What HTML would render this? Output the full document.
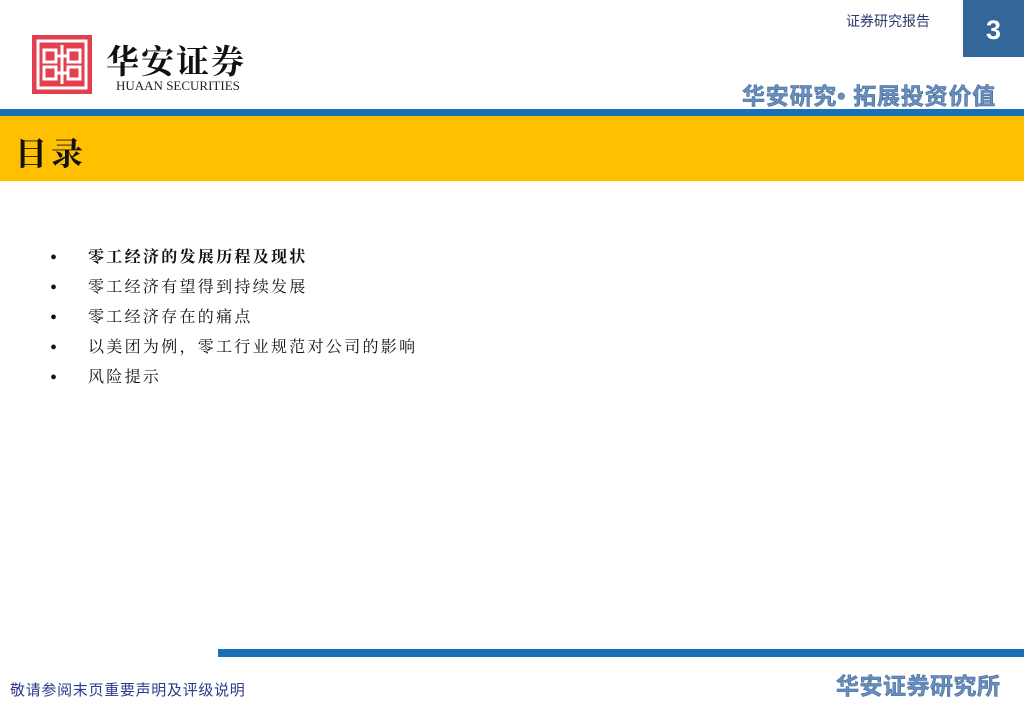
<!DOCTYPE html>
<html><head><meta charset="utf-8"><style>
body{margin:0;width:1024px;height:709px;position:relative;background:#fff;overflow:hidden;font-family:"Liberation Sans","Noto Sans CJK SC",sans-serif}
.a{position:absolute}
.li{position:absolute;left:50px;font-family:"Liberation Serif","Noto Serif CJK SC",serif;font-size:16px;letter-spacing:2.3px;color:#111;line-height:20px}
.li b.d{position:absolute;left:0;top:0;font-size:20px;font-weight:normal}
.li span{position:absolute;left:38px;white-space:nowrap}
</style></head><body>
<div class="a" style="left:963px;top:0;width:61px;height:57px;background:#336699;color:#fff;font-weight:bold;font-size:27px;text-align:center;line-height:60px">3</div>
<div class="a" style="left:846px;top:11px;font-size:14px;color:#2a3b6b">证券研究报告</div>
<div class="a" style="left:32px;top:35px;width:60px;height:59px;background:#e3404f">
<svg width="60" height="59" viewBox="0 0 60 59"><g fill="none" stroke="#fff" stroke-width="3"><rect x="6" y="6" width="48" height="47"/><rect x="12" y="15" width="12" height="12"/><rect x="36" y="15" width="12" height="12"/><rect x="12" y="32" width="12" height="12"/><rect x="36" y="32" width="12" height="12"/><path d="M24 21H36M24 38H36M30 10V49"/></g></svg></div>
<div class="a" style="left:106px;top:36px;font-family:'Noto Serif CJK SC',serif;font-size:33px;letter-spacing:2px;color:#111;font-weight:bold">华安证券</div>
<div class="a" style="left:116px;top:78px;font-family:'Liberation Serif',serif;font-size:13px;color:#222">HUAAN SECURITIES</div>
<div class="a" style="left:0;top:109px;width:1024px;height:7px;background:#1a6fb5"></div>
<div class="a" style="left:742px;top:84px;line-height:24px;font-size:23px;letter-spacing:0.8px;font-weight:bold;color:#6a8fbf;-webkit-text-stroke:0.5px #35628f;white-space:nowrap">华安研究• 拓展投资价值</div>
<div class="a" style="left:0;top:116px;width:1024px;height:65px;background:#fec000"></div>
<div class="a" style="left:15px;top:129px;font-family:'Noto Serif CJK SC',serif;font-size:32px;font-weight:bold;letter-spacing:4px;color:#111">目录</div>
<div class="li" style="top:248px"><b class="d">•</b><span style="font-weight:bold">零工经济的发展历程及现状</span></div>
<div class="li" style="top:278px"><b class="d">•</b><span>零工经济有望得到持续发展</span></div>
<div class="li" style="top:308px"><b class="d">•</b><span>零工经济存在的痛点</span></div>
<div class="li" style="top:338px"><b class="d">•</b><span>以美团为例，零工行业规范对公司的影响</span></div>
<div class="li" style="top:368px"><b class="d">•</b><span>风险提示</span></div>
<div class="a" style="left:218px;top:649px;width:806px;height:8px;background:#1a6fb5"></div>
<div class="a" style="left:10px;top:679px;font-size:15px;letter-spacing:0.7px;color:#2a3b8b;white-space:nowrap">敬请参阅末页重要声明及评级说明</div>
<div class="a" style="left:836px;top:667px;font-size:23px;letter-spacing:0.5px;font-weight:bold;color:#6a8fbf;-webkit-text-stroke:0.5px #35628f;white-space:nowrap">华安证券研究所</div>
</body></html>
